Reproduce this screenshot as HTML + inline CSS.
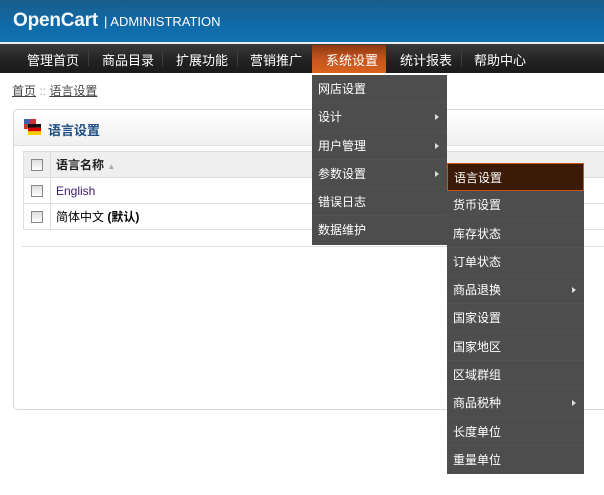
<!DOCTYPE html>
<html><head><meta charset="utf-8"><style>
*{margin:0;padding:0;box-sizing:border-box}
body{width:604px;height:495px;overflow:hidden;background:#fff;font-family:"Liberation Sans","Noto Sans CJK SC",sans-serif;font-size:12px;position:relative}
.hdr{position:absolute;left:0;top:0;width:604px;height:42px;background:linear-gradient(#1a5d8c,#0f6aa8 60%,#1272b0);}
.logo{position:absolute;left:13px;top:10px;color:#f4f8fb;font-size:19px;font-weight:bold;letter-spacing:-.2px}
.adm{position:absolute;left:104px;top:14px;color:#fff;font-size:13px}
.wl{position:absolute;top:42px;left:0;width:604px;height:2px;background:#e8eef3}
.nav{position:absolute;top:44px;left:0;width:604px;height:29px;background:linear-gradient(#3a3a3a,#222 60%,#1a1a1a)}
.nav span{position:absolute;top:6px;color:#fff;font-size:13px}
.nav i{position:absolute;top:6px;width:1px;height:16px;background:#3d3d3d}
.act{position:absolute;left:312px;top:45px;width:74px;height:28px;background:linear-gradient(#8c3a12,#c5541f 50%,#d8621f)}
.bc{position:absolute;left:12px;top:82px;color:#444;font-size:12px}
.bc u{text-decoration:underline}
.panel{position:absolute;left:13px;top:109px;width:620px;height:301px;border:1px solid #d8d8d8;border-radius:5px}
.ph{position:absolute;left:0;top:0;width:100%;height:36px;background:linear-gradient(#fff,#f0f0f0);border-bottom:1px solid #ddd;border-radius:5px 5px 0 0}
.ph b{position:absolute;left:34px;top:10px;color:#1d4d82;font-size:13px}
.flag{position:absolute;left:10px;top:9px;width:17px;height:16px}
table{position:absolute;left:23px;top:151px;width:600px;border-collapse:collapse}
td{border:1px solid #ddd;height:26px;padding-left:5px;font-size:12px}
tr.h td{background:#efefef;font-weight:bold;color:#222;height:26px}
td.c{width:27px;padding:0;text-align:center}
.cb{display:inline-block;width:12px;height:12px;border:1px solid #888;background:linear-gradient(#ddd,#fff);vertical-align:middle}
.line{position:absolute;left:22px;top:246px;width:582px;height:1px;background:#ddd}
.m{position:absolute;background:#4d4d4d;color:#fff;font-size:12px}
.m div{position:relative;height:28.3px;line-height:28px;padding-left:6px;border-bottom:1px solid #525252}
.m div.a:after{content:"";position:absolute;right:8px;top:11px;border-left:4px solid #ddd;border-top:3px solid transparent;border-bottom:3px solid transparent}
.sel{background:#3c1a08;border:1px solid #c5541f!important}
</style></head><body>
<div class="hdr"><div class="logo">OpenCart</div><div class="adm">| ADMINISTRATION</div></div>
<div class="wl"></div>
<div class="nav">
<span style="left:27px">管理首页</span><i style="left:88px"></i>
<span style="left:102px">商品目录</span><i style="left:162px"></i>
<span style="left:176px">扩展功能</span><i style="left:237px"></i>
<span style="left:250px">营销推广</span>
<span style="left:400px">统计报表</span><i style="left:461px"></i>
<span style="left:474px">帮助中心</span>
</div>
<div class="act"></div>
<div style="position:absolute;left:326px;top:50px;color:#fff;font-size:13px">系统设置</div>
<div class="bc"><u>首页</u> <span style="color:#aaa">::</span> <u>语言设置</u></div>
<div class="panel"><div class="ph">
<svg class="flag" viewBox="0 0 17 16"><rect x="0" y="0" width="12" height="10" fill="#c33"/><rect x="0" y="0" width="6" height="5" fill="#36a"/><rect x="4" y="5" width="13" height="3.7" fill="#111"/><rect x="4" y="8.7" width="13" height="3.6" fill="#d00"/><rect x="4" y="12.3" width="13" height="3.7" fill="#fc0"/></svg>
<b>语言设置</b></div></div>
<table>
<tr class="h"><td class="c"><span class="cb"></span></td><td>语言名称 <span style="color:#aaa;font-size:8px">▲</span></td></tr>
<tr><td class="c"><span class="cb"></span></td><td style="color:#3a1a6e">English</td></tr>
<tr><td class="c"><span class="cb"></span></td><td>简体中文 <b>(默认)</b></td></tr>
</table>
<div class="line"></div>
<div class="m" style="left:312px;top:75px;width:135px;height:170px">
<div>网店设置</div><div class="a">设计</div><div class="a">用户管理</div><div class="a">参数设置</div><div>错误日志</div><div style="border:none">数据维护</div>
</div>
<div class="m" style="left:447px;top:163px;width:137px;height:311px">
<div class="sel">语言设置</div><div>货币设置</div><div>库存状态</div><div>订单状态</div><div class="a">商品退换</div><div>国家设置</div><div>国家地区</div><div>区域群组</div><div class="a">商品税种</div><div>长度单位</div><div style="border:none">重量单位</div>
</div>
</body></html>
